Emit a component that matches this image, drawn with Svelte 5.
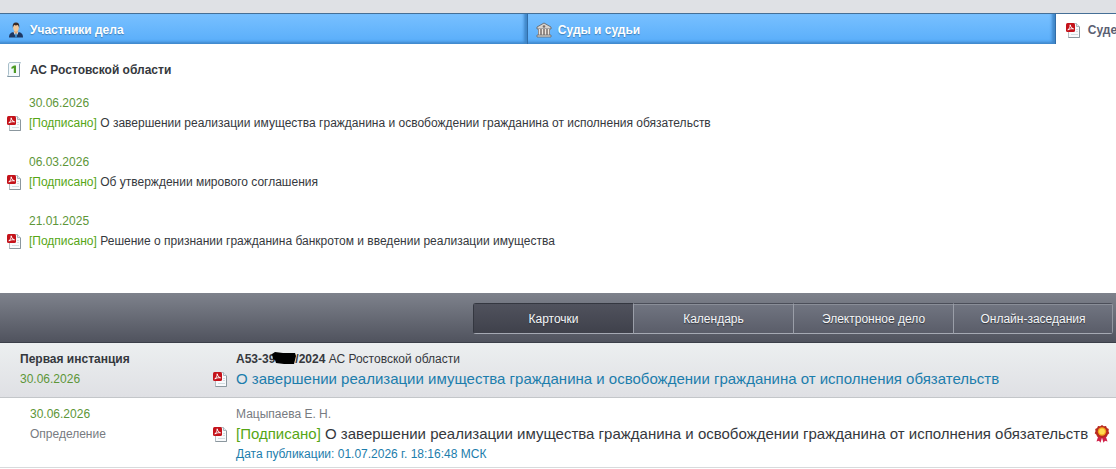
<script lang="ts">
  interface Act { date: string; text: string; }

  const acts: Act[] = [
    { date: '30.06.2026', text: 'О завершении реализации имущества гражданина и освобождении гражданина от исполнения обязательств' },
    { date: '06.03.2026', text: 'Об утверждении мирового соглашения' },
    { date: '21.01.2025', text: 'Решение о признании гражданина банкротом и введении реализации имущества' },
  ];

  const views = ['Карточки', 'Календарь', 'Электронное дело', 'Онлайн-заседания'];

  let view = $state('Карточки');
</script>

{#snippet pdf()}
  <svg class="icon pdf" viewBox="0 0 16 16" aria-hidden="true">
    <path d="M2.500 1.500h8l3 3v11h-11z" fill="#f8fafc" stroke="#b4bdc3" />
    <path d="M13.500 5v10.500h-11" fill="none" stroke="#8b979e" />
    <path d="M10.500 1.500v3h3" fill="#e4eaee" stroke="#a9b6bd" />
    <path d="M10 7.500h2M10 9.500h2M5 12.500h7" stroke="#d2dce0" />
    <rect x="0" y="1" width="9" height="9" rx="1.500" fill="#c4121a" />
    <path d="M4.200 2.800c.4 2 1.200 3.200 3.300 4-2.200-.3-4 .1-5.700 1.200C3.500 6.500 4.200 5 4.200 2.800z" fill="#c4121a" stroke="#fff" stroke-width="1" />
  </svg>
{/snippet}

<div class="page">
  <nav class="tabs">
    <button class="tab">
      <svg class="icon" viewBox="0 0 16 16" aria-hidden="true">
        <path d="M1 15.500c0-3.500 1.500-5 5-5.500h4c3.500.5 5 2 5 5.500z" fill="#1d3763" />
        <path d="M5.500 10 8 15.500 10.500 10z" fill="#f3f6fa" />
        <path d="M7.400 11h1.200l.5 4.500H6.900z" fill="#2b7fc4" />
        <path d="M6.300 8h3.400v2.500L8 12l-1.700-1.500z" fill="#dba878" />
        <ellipse cx="8" cy="5.500" rx="2.800" ry="3.900" fill="#f2c799" />
        <path d="M4.800 6C4.200 2.300 5.500.5 8 .5s3.800 1.800 3.200 5.500c-.5-2-1-2.600-1.700-2.900-1.200.5-2.300.4-3.200 0C5.600 3.800 5.200 4.500 4.800 6z" fill="#3b2a26" />
      </svg>
      Участники дела
    </button>
    <button class="tab">
      <svg class="icon" viewBox="0 0 16 16" aria-hidden="true">
        <path d="M8 1 15 5v2H1V5z" fill="#d9d4ce" stroke="#65696f" stroke-width=".9" />
        <circle cx="8" cy="4.500" r="1.300" fill="#776c68" />
        <path d="M2 7h12v6H2z" fill="#776c68" />
        <path d="M3.500 7v6M6.500 7v6M9.500 7v6M12.500 7v6" stroke="#eee7df" stroke-width="1.500" />
        <path d="M1 13h14v2H1z" fill="#ded8cf" stroke="#65696f" stroke-width=".8" />
      </svg>
      Суды и судьи
    </button>
    <button class="tab active">
      {@render pdf()}
      Судебные акты
    </button>
  </nav>

  <section class="acts">
    <h2>
      <svg class="icon" viewBox="0 0 16 16" aria-hidden="true">
        <path d="M2.500 .5h11l-1 1.500v12.500h-12l1-2V2z" fill="#f4f9fb" stroke="#a9bfca" />
        <path d="M12.500 2v12.500h-12" fill="none" stroke="#8196a3" />
        <path d="M4.500 5 7 3.500h2V11H6.800V5.900l-2.300 1z" fill="#4c9a24" />
      </svg>
      АС Ростовской области
    </h2>
    {#each acts as act}
      <article class="act">
        <time>{act.date}</time>
        <div class="act-line">
          {@render pdf()}
          <a href="#act"><span class="signed">[Подписано]</span> {act.text}</a>
        </div>
      </article>
    {/each}
  </section>

  <div class="toolbar">
    <div class="views">
      {#each views as name}
        <button class="view" class:selected={view === name} onclick={() => (view = name)}>{name}</button>
      {/each}
    </div>
  </div>

  <section class="row instance">
    <div class="side">
      <strong>Первая инстанция</strong>
      <time>30.06.2026</time>
    </div>
    <div class="main">
      <div class="case">
        <strong>А53-39<span class="hidden-digits"><svg viewBox="0 0 24 13" aria-hidden="true"><path d="M0 2 3 0l8 1 12 0 1 3-2 8-10 0-8-1-1-3-2-1z" fill="#000" /></svg></span>/2024</strong>
        АС Ростовской области
      </div>
      <div class="title">
        {@render pdf()}
        <a class="blue" href="#instance">{acts[0].text}</a>
      </div>
    </div>
  </section>

  <section class="row event">
    <div class="side">
      <time>30.06.2026</time>
      <span class="kind">Определение</span>
    </div>
    <div class="main">
      <div class="judge">Мацыпаева Е. Н.</div>
      <div class="title">
        {@render pdf()}
        <a href="#event"><span class="signed">[Подписано]</span> {acts[0].text}</a>
        <svg class="rosette" viewBox="0 0 16 18" aria-hidden="true">
          <path d="M5 9 2.500 16.500l2.500-.7 1.500 2 1.500-5 1.500 5 1.500-2 2.500.7L11 9z" fill="#d02048" />
          <path d="m8 0 1.800 1.200 2.200-.2.900 2 1.900 1.100-.3 2.200.8 2-1.700 1.400-.7 2.100-2.200.1L8 13l-2.700-1.100-2.200-.1-.7-2.100L.7 8.300l.8-2-.3-2.200L3.100 3 4 1l2.200.2z" fill="#b92a20" />
          <circle cx="8" cy="6.500" r="4.200" fill="#f3a51c" />
          <circle cx="8" cy="6.500" r="2.900" fill="#ffdc50" />
        </svg>
      </div>
      <div class="published">Дата публикации: 01.07.2026 г. 18:16:48 МСК</div>
    </div>
  </section>
</div>

<style>
  :global(body) { background: #fff; }
  .page {
    overflow: hidden; color: #35383d;
    font: 12px/20px "Liberation Sans", Arial, sans-serif;
  }
  button { font: inherit; cursor: pointer; }
  a { color: inherit; text-decoration: none; }
  time { color: #5d9638; }
  .icon { width: 16px; height: 16px; flex: none; }
  .signed { color: #56a615; }

  .tabs { display: flex; padding-top: 13px; background: #dfe1e5; }
  .tab {
    display: flex; align-items: center; gap: 6px; flex: 0 0 47.3%;
    height: 31px; padding: 2px 8px 0; white-space: nowrap;
    color: #fff; font-weight: 700; text-shadow: 0 1px 1px #3f7fb8;
    background: linear-gradient(#78c0ff, #58adfa);
    border: 0; border-top: 1px solid #456f96; border-right: 1px solid #326da8;
    box-shadow: inset -3px -2px 3px #3f86c8;
  }
  .tab.active {
    padding-left: 10px; background: #fff; color: #5b6072;
    text-shadow: none; box-shadow: none; border-right: 0;
  }

  .acts { padding: 16px 8px 23px 7px; }
  h2 { display: flex; align-items: center; gap: 7px; margin: 0 0 13px; font-size: 12px; line-height: 20px; }
  .act { margin-bottom: 19px; }
  .act time { display: block; padding-left: 22px; }
  .act-line { display: flex; align-items: center; gap: 6px; }

  .toolbar {
    display: flex; justify-content: flex-end; padding: 10px 3px 8px;
    background: linear-gradient(#7e828c, #50535e); border-bottom: 1px solid #3b3f49;
  }
  .views {
    display: grid; grid-template-columns: repeat(4, 160px);
    border-radius: 3px; overflow: hidden;
  }
  .view {
    height: 31px; padding: 0; color: #f4f6f8; text-shadow: 0 1px 1px #33363e;
    background: linear-gradient(#717581, #5a5d69);
    border: 1px solid #4b4e59; border-left-color: #9a9ea8; border-bottom-color: #a5a9b3; border-right: 0;
    box-shadow: inset 0 1px #8a8e98;
  }
  .view.selected {
    background: linear-gradient(#50525d, #3f414b); border-color: #343740 #343740 #a5a9b3;
    box-shadow: none;
  }
  .view:last-child { border-right: 1px solid #92969f; }

  .row { display: grid; grid-template-columns: 193px 1fr; padding: 6px 8px 8px 20px; border-bottom: 1px solid #c3c6c9; }
  .side { display: flex; flex-direction: column; }
  .instance { background: linear-gradient(#eceff0, #dfe0e4); }
  .case, .judge, .published { padding-left: 23px; white-space: nowrap; }
  .judge, .kind { color: #777b81; }
  .title { display: flex; align-items: center; gap: 7px; font-size: 15px; white-space: nowrap; }
  .blue, .published { color: #1c7dac; }
  .hidden-digits { position: relative; display: inline-block; width: 20px; }
  .hidden-digits svg { position: absolute; left: -3px; bottom: -2px; width: 24px; height: 13px; }
  .event { padding-bottom: 3px; border-bottom-color: #d8dadc; }
  .event .side { padding-left: 10px; }
  .rosette { width: 16px; height: 18px; flex: none; margin-left: -1px; }
</style>
